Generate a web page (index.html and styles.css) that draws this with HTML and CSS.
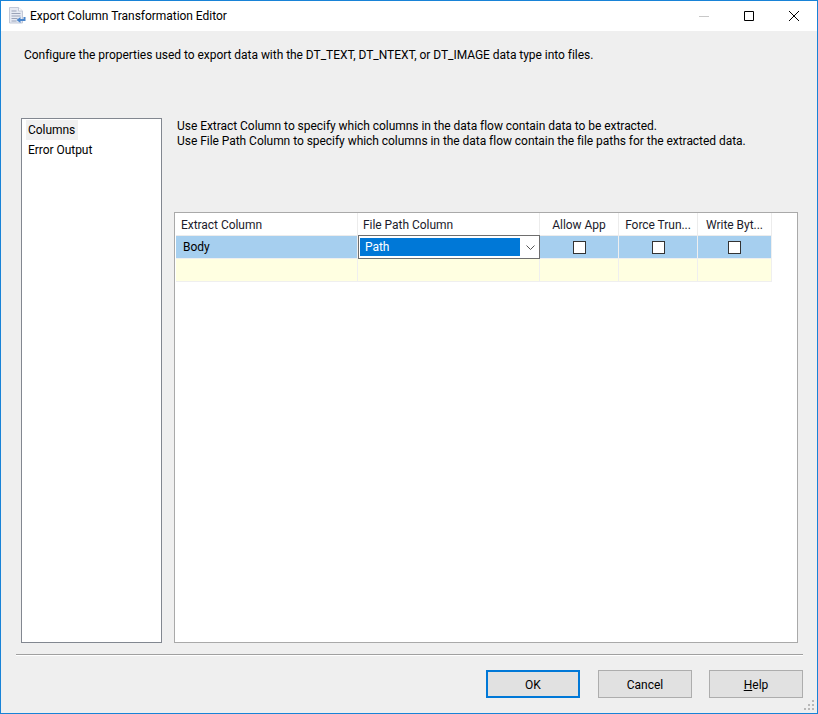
FILE: index.html
```html
<!DOCTYPE html>
<html lang="en">
<head>
    <meta charset="UTF-8">
    <title>Export Column Transformation Editor</title>
    <link rel="stylesheet" href="styles.css">
</head>
<body>

<div class="window">

    <!-- title bar -->
    <div class="titleBar">
        <svg class="appIcon" width="17" height="17" viewBox="0 0 17 17">
            <path d="M.5.500h9l4 3.500v12h-13z" fill="#e6eaf3" stroke="#c3c9d8"/>
            <path d="M9.500.500v3.500h4" fill="#fff" stroke="#c3c9d8"/>
            <path d="M2.500 4h5M2.500 6.500h9M2.500 9h9M2.500 11.500h6M2.500 14h5" stroke="#9aa3b8"/>
            <path d="M16.500 10v4h-5v2l-4-3 4-3v2h3v-2z" fill="#4a86cc"/>
        </svg>
        <span class="titleText">Export Column Transformation Editor</span>
        <div class="windowButtons">
            <svg class="winBtn" width="10" height="10" viewBox="0 0 10 10"><path d="M0 5.500h10" stroke="#c8c8c8"/></svg>
            <svg class="winBtn" width="10" height="10" viewBox="0 0 10 10"><path d="M.5.500h9v9h-9z" fill="none" stroke="#000"/></svg>
            <svg class="winBtn" width="10" height="10" viewBox="0 0 10 10"><path d="M0 0l10 10M10 0L0 10" stroke="#000"/></svg>
        </div>
    </div>

    <div class="dialogBody">
        <p class="description">Configure the properties used to export data with the DT_TEXT, DT_NTEXT, or DT_IMAGE data type into files.</p>

        <div class="mainArea">
            <!-- page list on the left -->
            <ul class="pageList">
                <li class="selected">Columns</li>
                <li>Error Output</li>
            </ul>

            <div class="pagePane">
                <p class="help">Use Extract Column to specify which columns in the data flow contain data to be extracted.<br>Use File Path Column to specify which columns in the data flow contain the file paths for the extracted data.</p>

                <div class="gridPanel">
                    <div class="grid">
                        <div class="hdr">Extract Column</div>
                        <div class="hdr">File Path Column</div>
                        <div class="hdr center">Allow App</div>
                        <div class="hdr center">Force Trun...</div>
                        <div class="hdr center">Write Byt...</div>

                        <div class="cell rowSel body">Body</div>
                        <div class="cell combo">
                            <span class="comboValue">Path</span>
                            <svg class="chevron" width="9" height="5" viewBox="0 0 9 5"><path d="M.5.500l4 4 4-4" fill="none" stroke="#555"/></svg>
                        </div>
                        <div class="cell rowSel center"><span class="check"></span></div>
                        <div class="cell rowSel center"><span class="check"></span></div>
                        <div class="cell rowSel center"><span class="check"></span></div>

                        <div class="cell rowNew"></div>
                        <div class="cell rowNew"></div>
                        <div class="cell rowNew"></div>
                        <div class="cell rowNew"></div>
                        <div class="cell rowNew"></div>
                    </div>
                </div>
            </div>
        </div>

        <div class="separator"></div>

        <div class="footer">
            <button class="btn default">OK</button>
            <button class="btn">Cancel</button>
            <button class="btn"><u>H</u>elp</button>
        </div>
    </div>

    <!-- resize grip -->
    <svg class="grip" width="11" height="11" viewBox="0 0 11 11">
        <path d="M8 0h2v2H8zM4 4h2v2H4zM8 4h2v2H8zM0 8h2v2H0zM4 8h2v2H4zM8 8h2v2H8z" fill="#b8b8b8"/>
    </svg>
</div>

</body>
</html>
```

FILE: styles.css
```css
* {
    box-sizing: border-box;
}

html, body {
    margin: 0;
    padding: 0;
}

body {
    width: 818px;
    height: 714px;
    overflow: hidden;
    font-family: Roboto, "Noto Sans", sans-serif;
    font-size: 12px;
    letter-spacing: -0.04px;
    color: #000;
}

.window {
    position: relative;
    width: 818px;
    height: 714px;
    display: flex;
    flex-direction: column;
    border: 1px solid #1883d7;
    background: #efefef;
}

.titleBar {
    height: 30px;
    flex: none;
    display: flex;
    align-items: center;
    padding-left: 8px;
    padding-bottom: 1px;
    background: #fff;
}

.appIcon {
    margin-right: 4px;
}

.titleText {
    font-size: 12px;
}

.windowButtons {
    margin-left: auto;
    display: flex;
    align-items: center;
    gap: 35px;
    padding-right: 18px;
}

.dialogBody {
    flex: 1;
    display: flex;
    flex-direction: column;
    padding: 0 14px 0 15px;
}

.description {
    margin: 15px 0 0 8px;
    line-height: 18px;
    height: 72px;
}

.mainArea {
    height: 525px;
    display: flex;
    padding-left: 5px;
}

.pageList {
    width: 141px;
    margin: 0;
    padding: 1px 0 0 4px;
    list-style: none;
    background: #fff;
    border: 1px solid #828790;
}

.pageList li {
    width: 52px;
    height: 20px;
    line-height: 20px;
    padding-left: 2px;
    white-space: nowrap;
}

.pageList li.selected {
    background: #f0f0f0;
}

.pagePane {
    width: 624px;
    margin-left: 12px;
    display: flex;
    flex-direction: column;
}

.help {
    margin: 0;
    height: 94px;
    padding: 1px 0 0 3px;
    line-height: 15px;
}

.gridPanel {
    flex: 1;
    background: #fff;
    border: 1px solid #a9a9a9;
    padding-left: 1px;
}

.grid {
    display: grid;
    grid-template-columns: 182px 182px 79px 79px 74px;
    grid-template-rows: 23px 23px 23px;
    width: 596px;
}

.hdr {
    display: flex;
    align-items: center;
    padding-left: 5px;
    padding-top: 1px;
    background: #fff;
    color: #1b1b2b;
    border-right: 1px solid #ececec;
    border-bottom: 1px solid #ececec;
}

.center {
    justify-content: center;
    padding-left: 0;
}

.cell {
    display: flex;
    align-items: center;
    border-right: 1px solid #efefef;
    border-bottom: 1px solid #efefef;
}

.rowSel {
    background: #a6cfef;
}

.body {
    padding-left: 7px;
}

.rowNew {
    background: #ffffe1;
}

.combo {
    background: #fff;
    border: 1px solid #6e6e6e;
    margin: -1px 0 0 0;
    padding: 2px 0 2px 1px;
    position: relative;
}

.comboValue {
    width: 160px;
    height: 100%;
    display: flex;
    align-items: center;
    padding-left: 5px;
    color: #fff;
    background: #0078d7;
}

.chevron {
    margin-left: 6px;
}

.check {
    width: 13px;
    height: 13px;
    background: #fff;
    border: 1px solid #333;
}

.separator {
    height: 2px;
    flex: none;
    margin-top: 11px;
    background: #a0a0a0;
    border-bottom: 1px solid #fff;
}

.footer {
    display: flex;
    justify-content: flex-end;
    gap: 18px;
    padding-top: 14px;
}

.footer .btn:last-child {
    margin-left: -1px;
}

.btn {
    width: 94px;
    height: 28px;
    padding: 1px 0 0;
    font: inherit;
    color: #000;
    background: #e1e1e1;
    border: 1px solid #adadad;
}

.btn.default {
    border: 2px solid #0078d7;
}

.grip {
    position: absolute;
    right: 2px;
    bottom: 2px;
}
```
